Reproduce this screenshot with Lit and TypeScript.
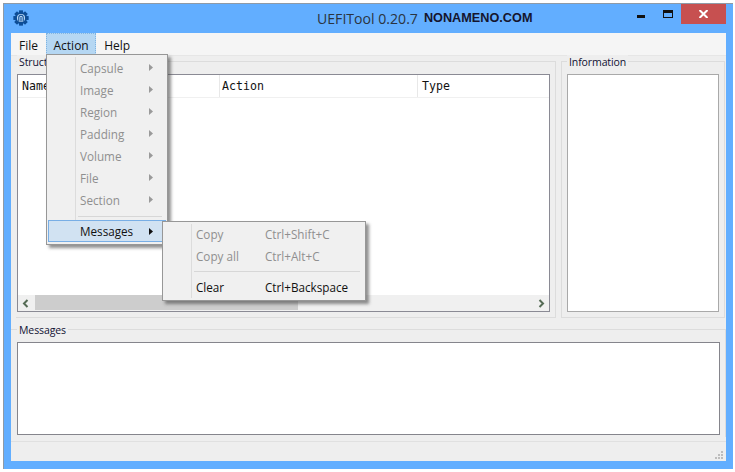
import { LitElement, html, css, svg } from "lit";
import { customElement } from "lit/decorators.js";

const gear = svg`<svg width="16" height="16" viewBox="0 0 18 18">
<g fill="#0d4d96"><circle cx="9" cy="9" r="6.8"/>
${[0, 45, 90, 135, 180, 225, 270, 315].map(
  (a) => svg`<rect x="6.8" y="0.4" width="4.4" height="4" transform="rotate(${a} 9 9)"/>`
)}</g>
<circle cx="9" cy="9" r="4.6" fill="#b9d6f2"/>
<path d="M6.5 13V8.5Q6.5 6 9 6Q11.5 6 11.5 8.5V13M9 8V13" fill="none" stroke="#0d4d96" stroke-width="1.2"/>
</svg>`;

@customElement("app-root")
export class AppRoot extends LitElement {
  static styles = css`
    :host { display: block; width: 735px; height: 472px; background: #fff; overflow: hidden; position: relative;
      font-family: "Open Sans", "Noto Sans", sans-serif; font-size: 12px; color: #111; }
    .window { margin: 3px 1px 0 3px; width: 730px; height: 466px; box-sizing: border-box; background: #62aeff;
      border: 1px solid #8f9aa6; border-bottom: none; border-right: none; display: flex; flex-direction: column; padding: 0 7px 8px 7px; }
    .title { height: 29px; flex: none; display: flex; align-items: flex-start; position: relative; margin: 0 -7px; }
    .appicon { margin: 6px 0 0 9px; line-height: 0; }
    .caption { position: absolute; left: 313px; top: 5px; font-size: 14.1px; color: #2b3440; white-space: nowrap; display: flex; align-items: baseline; }
    .brand { font-family: "Liberation Sans", sans-serif; font-weight: 700; font-size: 12.7px; color: #15152e; margin-left: 6px; position: relative; top: -2px; }
    .controls { margin-left: auto; display: flex; margin-right: 7px; }
    .min { width: 28px; height: 20px; position: relative; }
    .min::after { content: ""; position: absolute; left: 13px; top: 11px; width: 8px; height: 3px; background: #111; }
    .max { width: 29px; height: 20px; position: relative; }
    .max::after { content: ""; position: absolute; left: 11px; top: 6px; width: 8px; height: 4px; border: 1px solid #111; border-top-width: 3px; box-sizing: content-box; }
    .close { width: 45px; height: 20px; background: #c75050; display: flex; align-items: center; justify-content: center; }
    .client { flex: 1; min-height: 0; display: flex; flex-direction: column; background: #eeeeee; }
    .menubar { height: 22px; flex: none; background: #f5f5f5; display: flex; border-bottom: 1px solid #e6e6e6; box-sizing: content-box; }
    .mi { padding: 0 8px; line-height: 25px; height: 22px; font-size: 12px; }
    .mi.on { background: #b5d7f3; outline: 1px dotted #7fb4e2; outline-offset: -1px; padding: 0 7.5px; }
    .top { height: 262px; flex: none; display: flex; padding: 5px 0 0 5px; gap: 5px; box-sizing: border-box; }
    .group { position: relative; border: 1px solid #dcdcdc; box-sizing: border-box; }
    .group > .legend { position: absolute; top: -7px; background: #eee; padding: 0 2px; line-height: 14px; font-size: 10.5px; letter-spacing: -0.1px; color: #111133; }
    .g1 { width: 540px; padding: 12px 5px 5px 1px; border-left: none; }
    .g2 { width: 164px; padding: 12px 5px 5px 5px; }
    .g1 > .legend { left: 1px; }
    .g2 > .legend { left: 5px; }
    .view { height: 100%; box-sizing: border-box; background: #fff; border: 1px solid #8a8a94; display: flex; flex-direction: column; }
    .g2 .view { border-color: #a9a9a9; }
    .head { height: 22px; flex: none; display: grid; grid-template-columns: 202px 198px 1fr; border-bottom: 1px solid #f0f0f0;
      font-family: "DejaVu Sans Mono", monospace; font-size: 11.6px; line-height: 22px; color: #111; }
    .head span { padding-left: 4px; border-right: 1px solid #e8e8e8; }
    .head span.a { padding-left: 2px; }
    .head span:last-child { border: none; }
    .body { flex: 1; }
    .hbar { height: 16px; flex: none; background: #f0f0f0; display: flex; align-items: center; justify-content: space-between; position: relative; padding: 0 4px; }
    .thumb { position: absolute; left: 17px; top: 0; width: 263px; height: 15px; background: #cdcdcd; }
    .bottom { flex: 1; min-height: 0; position: relative; margin-top: 11px; }
    .g3 { height: 108px; border-left: none; border-bottom: none; padding: 12px 5px 0 6px; }
    .g3 .view { height: 93px; border-color: #85858c; }
    .g3 > .legend { left: 6px; top: -7px; }
    .status { position: absolute; left: 0; right: 0; bottom: 0; height: 20px; border-top: 1px solid #e0e0e0; box-sizing: border-box; }
    .grip { position: absolute; right: 2px; bottom: 0; }
    .menu { position: absolute; background: #f0f0f0; border: 1px solid #979797; box-sizing: border-box; box-shadow: 3px 3px 3px rgba(70,70,70,.6); }
    .m1 { left: 46px; top: 54px; width: 122px; height: 191px; padding: 2px 1px 1px 1px; }
    .m2 { left: 162px; top: 221px; width: 204px; height: 80px; padding: 1px 1px 1px 1px; }
    .row { height: 22px; display: flex; align-items: center; position: relative; color: #8f8f8f; font-size: 11.7px; }
    .m1 .row { padding-left: 32px; }
    .m2 .row { padding-left: 32px; }
    .row .sc { position: absolute; left: 101px; white-space: nowrap; }
    .row.en { color: #111; }
    .row .arr { position: absolute; left: 101px; top: 7px; }
    .row.sel { background: #d1e2f2; outline: 1px solid #78aee5; outline-offset: -1px; }
    .row.sel .arr { top: 8px; }
    .gut { position: absolute; top: 2px; bottom: 2px; width: 1px; background: #dcdcdc; left: 28px; }
    .sep { height: 1px; background: #d7d7d7; margin: 4px 4px 4px 30px; }
    .m1 .sep { margin: 5px 4px 3px 30px; }
  `;

  arrow(dark = false) {
    return svg`<svg class="arr" width="4" height="7" viewBox="0 0 4 7"><path d="M0 0L4 3.5L0 7Z" fill="${dark ? "#111" : "#9a9a9a"}"/></svg>`;
  }

  render() {
    const items = ["Capsule", "Image", "Region", "Padding", "Volume", "File", "Section"];
    return html`
      <div class="window">
        <div class="title">
          <div class="appicon">${gear}</div>
          <div class="caption">UEFITool 0.20.7<span class="brand">NONAMENO.COM</span></div>
          <div class="controls">
            <div class="min"></div><div class="max"></div>
            <div class="close"><svg width="9" height="8" viewBox="0 0 9 8"><path d="M0.5 0L8.5 8M8.5 0L0.5 8" stroke="#fff" stroke-width="2"/></svg></div>
          </div>
        </div>
        <div class="client">
          <div class="menubar">
            <div class="mi">File</div><div class="mi on">Action</div><div class="mi">Help</div>
          </div>
          <div class="top">
            <div class="group g1"><div class="legend">Structure</div>
              <div class="view">
                <div class="head"><span>Name</span><span class="a">Action</span><span>Type</span></div>
                <div class="body"></div>
                <div class="hbar"><div class="thumb"></div>
                  <svg width="7" height="9" viewBox="0 0 7 9"><path d="M5.5 1L2 4.5L5.5 8" fill="none" stroke="#556b55" stroke-width="2"/></svg>
                  <svg width="7" height="9" viewBox="0 0 7 9"><path d="M1.5 1L5 4.5L1.5 8" fill="none" stroke="#556b55" stroke-width="2"/></svg>
                </div>
              </div>
            </div>
            <div class="group g2"><div class="legend">Information</div><div class="view"></div></div>
          </div>
          <div class="bottom">
            <div class="group g3"><div class="legend">Messages</div><div class="view"></div></div>
            <div class="status">
              <svg class="grip" width="10" height="10" viewBox="0 0 10 10" fill="#bdbdbd">
                <rect x="7" y="0" width="2" height="2"/><rect x="4" y="3" width="2" height="2"/><rect x="7" y="3" width="2" height="2"/>
                <rect x="1" y="6" width="2" height="2"/><rect x="4" y="6" width="2" height="2"/><rect x="7" y="6" width="2" height="2"/>
              </svg>
            </div>
          </div>
        </div>
      </div>
      <div class="menu m1"><div class="gut"></div>
        ${items.map((i) => html`<div class="row">${i}${this.arrow()}</div>`)}
        <div class="sep"></div>
        <div class="row en sel">Messages${this.arrow(true)}</div>
      </div>
      <div class="menu m2"><div class="gut"></div>
        <div class="row">Copy<span class="sc">Ctrl+Shift+C</span></div>
        <div class="row">Copy all<span class="sc">Ctrl+Alt+C</span></div>
        <div class="sep"></div>
        <div class="row en">Clear<span class="sc">Ctrl+Backspace</span></div>
      </div>
    `;
  }
}
